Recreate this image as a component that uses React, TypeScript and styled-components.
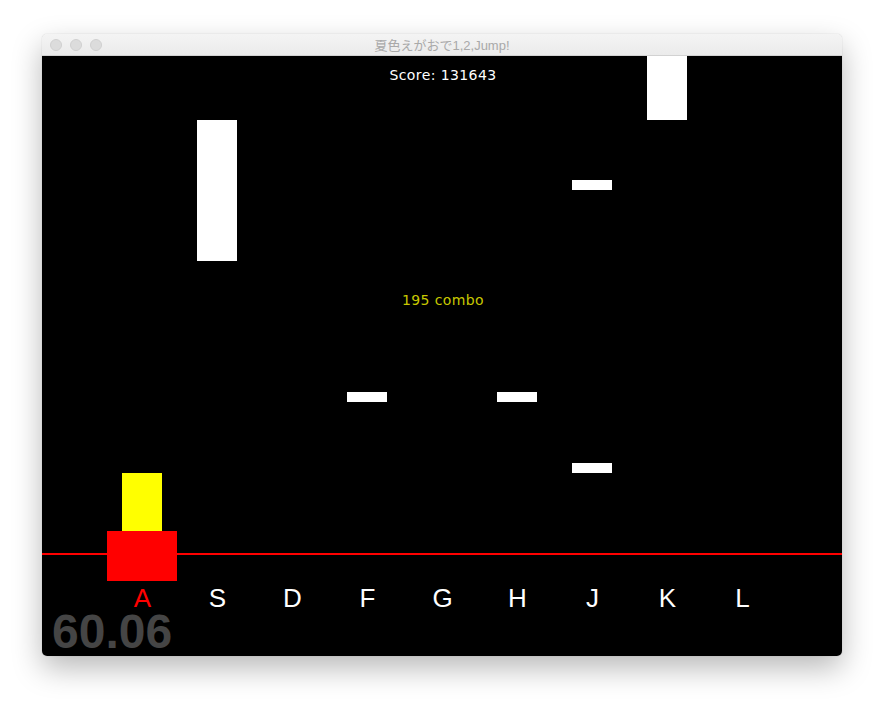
import React from "react";
import styled, { createGlobalStyle } from "styled-components";

const Global = createGlobalStyle`
  html, body { margin: 0; padding: 0; background: #ffffff; }
  body { font-family: "Liberation Sans", Arial, sans-serif; }
`;

const Page = styled.div`
  width: 884px;
  height: 706px;
  padding: 34px 0 0 42px;
  box-sizing: border-box;
`;

const Window = styled.div`
  width: 800px;
  display: flex;
  flex-direction: column;
  border-radius: 5px;
  overflow: hidden;
  box-shadow: 0 12px 30px rgba(0, 0, 0, 0.28), 0 0 1px rgba(0, 0, 0, 0.3);
`;

const TitleBar = styled.div`
  height: 22px;
  display: flex;
  align-items: center;
  position: relative;
  background: linear-gradient(#f4f4f4, #ebebeb);
  border-bottom: 1px solid #d2d2d2;
  box-sizing: border-box;
  padding-left: 8px;
  gap: 8px;
`;

const Light = styled.span`
  width: 12px;
  height: 12px;
  border-radius: 50%;
  background: #dcdcdc;
  border: 1px solid #d0d0d0;
  box-sizing: border-box;
`;

const Title = styled.div`
  position: absolute;
  inset: 0;
  display: flex;
  align-items: center;
  justify-content: center;
  font-family: "Liberation Sans", "Noto Sans CJK JP", sans-serif;
  font-size: 13px;
  color: #a9a9a9;
  pointer-events: none;
`;

const Canvas = styled.div`
  position: relative;
  width: 800px;
  height: 600px;
  background: #000;
  overflow: hidden;
`;

const Rect = styled.div<{ $c: string }>`
  position: absolute;
  background: ${(p) => p.$c};
`;

const HudText = styled.div<{ $top: number; $color: string }>`
  position: absolute;
  top: ${(p) => p.$top}px;
  left: 0;
  right: 0;
  text-align: center;
  color: ${(p) => p.$color};
  font-family: "DejaVu Sans", sans-serif;
  font-size: 14px;
  letter-spacing: 0.4px;
  transform: translateX(1px);
`;

const KeyRow = styled.div`
  position: absolute;
  left: 63px;
  top: 527px;
  display: flex;
`;

const KeyLabel = styled.div<{ $active?: boolean }>`
  width: 75px;
  text-align: center;
  font-family: "Liberation Sans", Arial, sans-serif;
  font-size: 26px;
  line-height: 30px;
  color: ${(p) => (p.$active ? "#ff0000" : "#ffffff")};
`;

const Fps = styled.div`
  position: absolute;
  left: 10px;
  top: 548px;
  font-family: "Liberation Sans", Arial, sans-serif;
  font-weight: bold;
  font-size: 48px;
  line-height: 56px;
  color: #454545;
`;

const keys = ["A", "S", "D", "F", "G", "H", "J", "K", "L"];
const colX = (i: number) => 100 + 75 * i;

type Note = { col: number; y: number; h: number };
const notes: Note[] = [
  { col: 1, y: 64, h: 141 },
  { col: 7, y: 0, h: 64 },
  { col: 6, y: 124, h: 10 },
  { col: 3, y: 336, h: 10 },
  { col: 5, y: 336, h: 10 },
  { col: 6, y: 407, h: 10 },
];

export default function App() {
  return (
    <Page>
      <Global />
      <Window>
        <TitleBar>
          <Light />
          <Light />
          <Light />
          <Title>夏色えがおで1,2,Jump!</Title>
        </TitleBar>
        <Canvas>
          <HudText $top={11} $color="#ffffff">Score: 131643</HudText>
          {notes.map((n, i) => (
            <Rect
              key={i}
              $c="#ffffff"
              style={{ left: colX(n.col) - 20, top: n.y, width: 40, height: n.h }}
            />
          ))}
          <HudText $top={236} $color="#c8c800">195 combo</HudText>
          <Rect $c="#ff0000" style={{ left: 0, top: 497, width: 800, height: 2 }} />
          <Rect $c="#ffff00" style={{ left: 80, top: 417, width: 40, height: 58 }} />
          <Rect $c="#ff0000" style={{ left: 65, top: 475, width: 70, height: 50 }} />
          <KeyRow>
            {keys.map((k, i) => (
              <KeyLabel key={k} $active={i === 0}>
                {k}
              </KeyLabel>
            ))}
          </KeyRow>
          <Fps>60.06</Fps>
        </Canvas>
      </Window>
    </Page>
  );
}
